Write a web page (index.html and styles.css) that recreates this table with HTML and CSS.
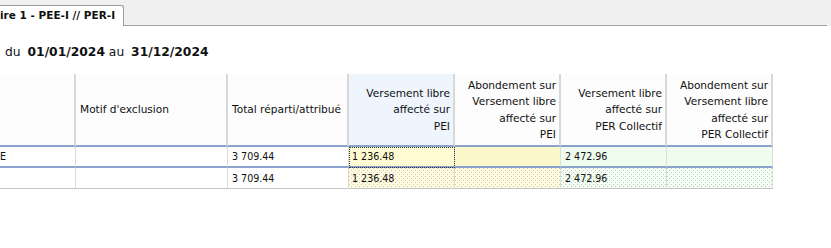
FILE: index.html
```html
<!DOCTYPE html>
<html lang="fr">
<head>
<meta charset="utf-8">
<title>Répartition</title>
<link rel="stylesheet" href="styles.css">
</head>
<body>
<div class="tabstrip">
  <div class="tab">ire 1 - PEE-I // PER-I</div>
  <div class="tabrest"></div>
</div>
<div class="period">du <b>01/01/2024</b> au <b>31/12/2024</b></div>
<div class="grid">
  <div class="hd"></div>
  <div class="hd left">Motif d'exclusion</div>
  <div class="hd left">Total réparti/attribué</div>
  <div class="hd right blue">Versement libre<br>affecté sur<br>PEI</div>
  <div class="hd right">Abondement sur<br>Versement libre<br>affecté sur<br>PEI</div>
  <div class="hd right">Versement libre<br>affecté sur<br>PER Collectif</div>
  <div class="hd right">Abondement sur<br>Versement libre<br>affecté sur<br>PER Collectif</div>

  <div class="c r1 first">E</div>
  <div class="c r1"></div>
  <div class="c r1 num">3 709.44</div>
  <div class="c r1 num yel focus">1 236.48</div>
  <div class="c r1 yel2"></div>
  <div class="c r1 num grn">2 472.96</div>
  <div class="c r1 grn"></div>

  <div class="c r2 first"></div>
  <div class="c r2"></div>
  <div class="c r2 num">3 709.44</div>
  <div class="c r2 num ydots pei">1 236.48</div>
  <div class="c r2 ydots"></div>
  <div class="c r2 num gdots">2 472.96</div>
  <div class="c r2 gdots"></div>
</div>
</body>
</html>
```
FILE: styles.css
```css
html, body {
  margin: 0;
  padding: 0;
  background: #ffffff;
  font-family: "DejaVu Sans", "Liberation Sans", sans-serif;
  color: #111;
}
.tabstrip {
  display: flex;
  height: 26px;
  background: #f0f0f0;
  box-sizing: border-box;
}
.tab {
  margin-top: 5px;
  width: 124px;
  height: 21px;
  box-sizing: border-box;
  background: #fff;
  border: 1px solid #9c9c9c;
  border-left: none;
  border-bottom: none;
  border-top-right-radius: 3px;
  font-size: 10.5px;
  font-weight: bold;
  line-height: 19px;
  white-space: nowrap;
  overflow: hidden;
  padding-left: 0;
}
.tabrest {
  width: 703px;
  border-bottom: 1px solid #a0a0a0;
  box-sizing: border-box;
}
.period {
  margin-top: 18px;
  padding-left: 5px;
  height: 16px;
  line-height: 16px;
  font-size: 12.3px;
}
.period b {
  font-weight: bold;
  margin-left: 3px;
}
.grid {
  margin-top: 14px;
  display: grid;
  grid-template-columns: 76px 152px 121px 106px 106px 106px 106px;
  grid-template-rows: 73px 21px 21px;
  width: 773px;
}
.hd {
  box-sizing: border-box;
  border-right: 2px solid #d8d8d8;
  border-bottom: 2px solid #8ba3cc;
  background: #fdfdfd;
  font-size: 10.6px;
  line-height: 16.5px;
  display: flex;
  flex-direction: column;
  justify-content: center;
}
.hd.left {
  padding-left: 4px;
}
.hd.right {
  text-align: right;
  padding-right: 3px;
}
.hd.blue {
  background: #eef5fd;
}
.c {
  box-sizing: border-box;
  border-right: 1px solid #dcdcdc;
  font-family: "DejaVu Sans Condensed", "DejaVu Sans", sans-serif;
  font-size: 10.6px;
  line-height: 19px;
  padding-left: 4px;
  white-space: nowrap;
  overflow: hidden;
}
.c.first {
  padding-left: 0;
}
.r1 {
  border-bottom: 2px solid #8ba3cc;
}
.r2 {
  border-bottom: 1px solid #c4c4c4;
  line-height: 20px;
}
.yel {
  background: #fffbd2;
}
.focus {
  outline: 1px dotted #333;
  outline-offset: -1px;
  padding-left: 3px;
  line-height: 19px;
}
.yel2 {
  background: #fdf8cc;
}
.grn {
  background: #effdef;
}
.pei {
  padding-left: 3px;
}
.ydots {
  background-color: #fffbe4;
  background-image:
    conic-gradient(from 90deg at 1px 1px, transparent 0 50%, #d4ca96 50% 75%, transparent 75%),
    conic-gradient(from 90deg at 1px 1px, transparent 0 50%, #d4ca96 50% 75%, transparent 75%);
  background-size: 4px 4px;
  background-position: 0 0, 2px 2px;
}
.gdots {
  background-color: #f5fff5;
  background-image:
    conic-gradient(from 90deg at 1px 1px, transparent 0 50%, #b6cfb6 50% 75%, transparent 75%),
    conic-gradient(from 90deg at 1px 1px, transparent 0 50%, #b6cfb6 50% 75%, transparent 75%);
  background-size: 4px 4px;
  background-position: 0 0, 2px 2px;
}
```
